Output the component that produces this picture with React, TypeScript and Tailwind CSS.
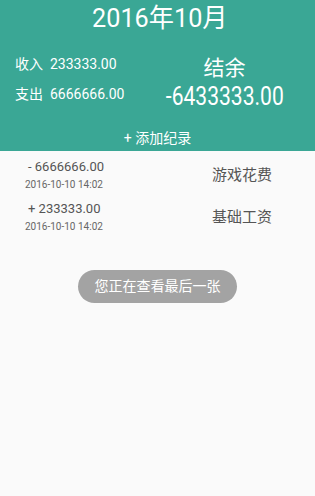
import React from "react";

const font = { fontFamily: 'Roboto, "Noto Sans CJK SC", sans-serif' };

export default function App() {
  return (
    <div className="w-[315px] h-[496px] bg-[#fafafa] flex flex-col overflow-hidden" style={font}>
      <div className="bg-[#3aa795] h-[151px] flex flex-col text-white">
        <div className="text-center text-[26px] leading-none pt-[5px] pl-[4px]">
          <span className="inline-block scale-x-[0.97]">2016年10月</span>
        </div>
        <div className="flex mt-[24px]">
          <div className="flex flex-col pl-[15px] gap-[12px] text-[14px] leading-[18px] w-[150px]">
            <div>收入&nbsp; 233333.00</div>
            <div>支出&nbsp; 6666666.00</div>
          </div>
          <div className="flex-1 flex flex-col items-center pr-[16px]">
            <div className="text-[21px] leading-[24px] mt-[1px]">结余</div>
            <div className="text-[26px] leading-[30px] mt-[1px]">
              <span className="inline-block scale-x-[0.81]">-6433333.00</span>
            </div>
          </div>
        </div>
        <div className="text-center text-[14px] leading-[18px] mt-[18px]">+ 添加纪录</div>
      </div>
      <div className="flex flex-col pt-[3px]">
        {[
          { amt: "- 6666666.00", cat: "游戏花费" },
          { amt: "+ 233333.00", cat: "基础工资" },
        ].map((r) => (
          <div key={r.cat} className="flex items-center h-[42px]">
            <div className="w-[190px] pl-[25px] flex flex-col items-start">
              <div className="text-[13px] leading-[17px] text-[#555] pl-[3px]">{r.amt}</div>
              <div className="text-[10px] leading-[14px] text-[#666] mt-[3px]">2016-10-10 14:02</div>
            </div>
            <div className="text-[15px] text-[#555] pl-[22px]">{r.cat}</div>
          </div>
        ))}
      </div>
      <div className="flex justify-center mt-[32px]">
        <div className="w-[159px] h-[33px] rounded-full bg-[#a3a3a3] text-white text-[14px] flex items-center justify-center">
          您正在查看最后一张
        </div>
      </div>
    </div>
  );
}
